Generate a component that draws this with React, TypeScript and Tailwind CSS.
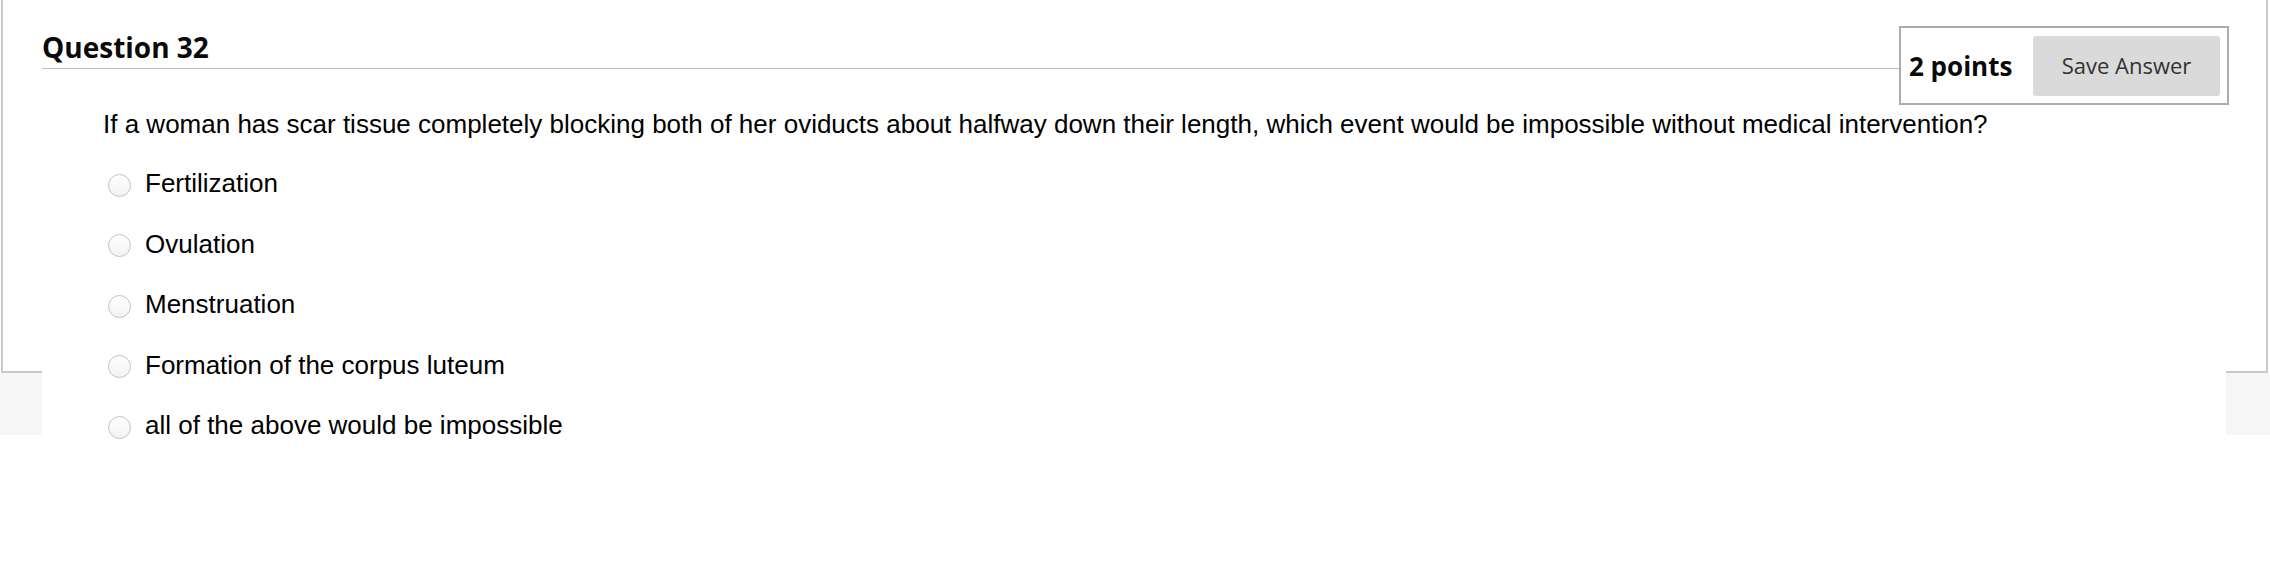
import React from "react";

const options = [
  "Fertilization",
  "Ovulation",
  "Menstruation",
  "Formation of the corpus luteum",
  "all of the above would be impossible",
];

export default function App() {
  return (
    <div className="w-[2270px] h-[572px] bg-white overflow-hidden">
      <div className="grid grid-cols-[42px_2184px_44px]">
        {/* left frame column */}
        <div className="flex flex-col">
          <div className="h-[373px] ml-px border-l-2 border-b-2 border-[#c9c9c9]" />
          <div className="h-[62px] bg-[#f6f6f6]" />
        </div>

        {/* content column */}
        <div className="bg-white h-[435px] relative z-10">
          <div className="flex items-start">
            <div className="flex-1 min-w-0 h-[69px] pt-[33px] border-b border-[#bdbdbd]">
              <div
                className="text-[28px] leading-none font-bold text-[#0a0a0a]"
                style={{ fontFamily: '"Open Sans", sans-serif' }}
              >
                Question 32
              </div>
            </div>
            <div className="shrink-0 w-[330px] h-[79px] mt-[26px] mr-[-3px] border-2 border-[#ababab] flex items-center pl-[8px] pr-[7px] bg-white">
              <span
                className="text-[26px] leading-none font-bold text-[#0a0a0a]"
                style={{ fontFamily: '"Open Sans", sans-serif' }}
              >
                2 points
              </span>
              <button
                className="ml-auto w-[187px] h-[60px] rounded-[3px] bg-[#dadada] text-[22px] text-[#333333] flex items-center justify-center"
                style={{ fontFamily: '"Open Sans", sans-serif' }}
              >
                Save Answer
              </button>
            </div>
          </div>

          <div
            className="mt-[4px] pl-[61px] text-[26px] leading-[30px] text-black"
            style={{ fontFamily: '"Liberation Sans", Arial, sans-serif' }}
          >
            If a woman has scar tissue completely blocking both of her oviducts about halfway down their length, which event would be impossible without medical intervention?
          </div>

          <div
            className="mt-[14px] pl-[66px] flex flex-col"
            style={{ fontFamily: '"Liberation Sans", Arial, sans-serif' }}
          >
            {options.map((o) => (
              <label key={o} className="h-[60.5px] flex items-center">
                <span className="mt-[4px] w-[23px] h-[23px] rounded-full border border-[#c2c2c2] bg-gradient-to-b from-white to-[#f2f2f2] shrink-0" />
                <span className="ml-[14px] text-[26px] leading-[30px] text-black">{o}</span>
              </label>
            ))}
          </div>
        </div>

        {/* right frame column */}
        <div className="flex flex-col">
          <div className="h-[373px] w-[42px] border-r-2 border-b-2 border-[#c9c9c9]" />
          <div className="h-[62px] bg-[#f6f6f6]" />
        </div>
      </div>
    </div>
  );
}
